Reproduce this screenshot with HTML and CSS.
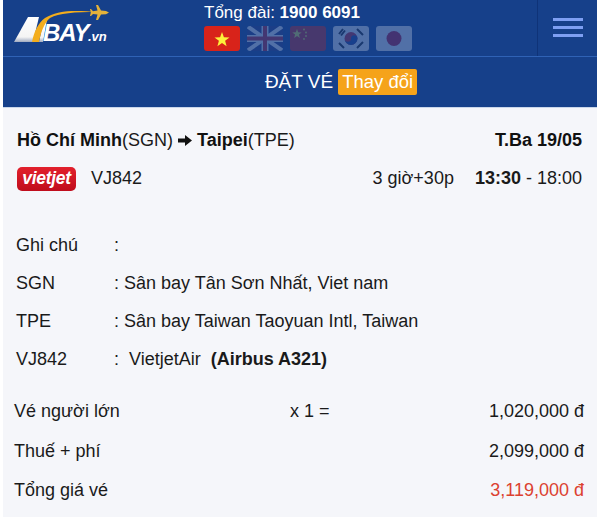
FILE: index.html
```html
<!DOCTYPE html>
<html lang="vi">
<head>
  <meta charset="UTF-8" />
  <title>ABAY.vn - Đặt vé</title>
  <link rel="stylesheet" href="styles.css">
</head>
<body>

<div class="page">
  <div class="header">
    <a class="logo">
      <svg width="96" height="42" viewBox="0 0 96 42">
        <defs>
          <linearGradient id="mount" x1="0" y1="0" x2="0" y2="1">
            <stop offset="0" stop-color="#ffffff"/>
            <stop offset="0.8" stop-color="#f4f4f4"/>
            <stop offset="1" stop-color="#9faac0"/>
          </linearGradient>
        </defs>
        <path d="M0 39 L14 14 L25 14 L19 39 Z" fill="url(#mount)"/>
        <path d="M25 39 L29 20 L33 16 L29 39 Z" fill="url(#mount)"/>
        <path d="M18 39 C20 29 24 20 31 15 C44 7 60 7 84 9 C60 9 45 10 36 15 C30 20 27 29 25 39 Z" fill="#f3ad1d"/>
        <path d="M82 2 L84 2 L87 7.6 L92 8 L95 9.6 L92 11.2 L87 11.6 L84 17 L82 17 L83.5 11.6 L79 11 L77 13 L76 13 L76.8 9.6 L76 6 L77 6 L79 8.2 L83.5 7.6 Z" fill="#e4b23a"/>
        <text x="29" y="38" class="logo-bay">BAY</text>
        <text x="74" y="38" class="logo-vn">.vn</text>
      </svg>
    </a>
    <div class="hotline">
      <div class="hotline-text">Tổng đài: <b>1900 6091</b></div>
      <div class="flags">
        <svg class="flag active" viewBox="0 0 36 25">
          <rect width="36" height="25" fill="#d8231a"/>
          <polygon points="18,6 19.9,11.2 25.5,11.4 21.1,14.8 22.6,20.2 18,17.1 13.4,20.2 14.9,14.8 10.5,11.4 16.1,11.2" fill="#fdf03a"/>
        </svg>
        <svg class="flag" viewBox="0 0 36 25">
          <rect width="36" height="25" fill="#2b3a80"/>
          <path d="M0 0 L36 25 M36 0 L0 25" stroke="#fff" stroke-width="4"/>
          <path d="M18 0 V25 M0 12.5 H36" stroke="#fff" stroke-width="7"/>
          <path d="M18 0 V25 M0 12.5 H36" stroke="#c8202f" stroke-width="4"/>
        </svg>
        <svg class="flag" viewBox="0 0 36 25">
          <rect width="36" height="25" fill="#d8231a"/>
          <polygon points="7,3 8.2,6.3 11.7,6.4 8.9,8.5 9.9,11.9 7,9.9 4.1,11.9 5.1,8.5 2.3,6.4 5.8,6.3" fill="#fdf03a"/>
          <circle cx="14" cy="3.5" r="0.9" fill="#fdf03a"/>
          <circle cx="16" cy="6.5" r="0.9" fill="#fdf03a"/>
          <circle cx="16" cy="10" r="0.9" fill="#fdf03a"/>
          <circle cx="14" cy="13" r="0.9" fill="#fdf03a"/>
        </svg>
        <svg class="flag" viewBox="0 0 36 25">
          <rect width="36" height="25" fill="#ffffff"/>
          <circle cx="18" cy="12.5" r="6.5" fill="#c8202f"/>
          <path d="M11.5 12.5 A6.5 6.5 0 0 0 24.5 12.5 A3.25 3.25 0 0 0 18 12.5 A3.25 3.25 0 0 1 11.5 12.5 Z" fill="#1c3f94"/>
          <path d="M6 8 L10 3 M8 9.5 L12 4.5 M24 3 L30 9 M24 22 L30 16 M6 17 L11 22" stroke="#222" stroke-width="2"/>
        </svg>
        <svg class="flag" viewBox="0 0 36 25">
          <rect width="36" height="25" fill="#ffffff"/>
          <circle cx="18" cy="12.5" r="7.5" fill="#c8102e"/>
        </svg>
      </div>
    </div>
    <div class="menu-btn">
      <span></span>
      <span></span>
      <span></span>
    </div>
  </div>

  <div class="title-bar">
    <span>ĐẶT VÉ</span>
    <a class="change-btn">Thay đổi</a>
  </div>

  <div class="content">
    <div class="route-row">
      <div><b>Hồ Chí Minh</b>(SGN)<svg class="arrow" width="14" height="11" viewBox="0 0 14 11"><path d="M0 3.5 H7 V0 L14 5.5 L7 11 V7.5 H0 Z" fill="#111"/></svg><b>Taipei</b>(TPE)</div>
      <b>T.Ba 19/05</b>
    </div>
    <div class="flight-row">
      <span class="airline-logo">vietjet</span>
      <span class="flight-no">VJ842</span>
      <span class="duration">3 giờ+30p</span>
      <span class="times"><b>13:30</b> - 18:00</span>
    </div>

    <div class="notes">
      <div class="note"><span class="note-label">Ghi chú</span><span>:</span></div>
      <div class="note"><span class="note-label">SGN</span><span>: Sân bay Tân Sơn Nhất, Viet nam</span></div>
      <div class="note"><span class="note-label">TPE</span><span>: Sân bay Taiwan Taoyuan Intl, Taiwan</span></div>
      <div class="note"><span class="note-label">VJ842</span><span>:&nbsp; VietjetAir&nbsp; <b>(Airbus A321)</b></span></div>
    </div>

    <div class="prices">
      <div class="price-row"><span class="price-name">Vé người lớn</span><span class="price-qty">x 1 =</span><span class="price-value">1,020,000 đ</span></div>
      <div class="price-row"><span class="price-name">Thuế + phí</span><span class="price-qty"></span><span class="price-value">2,099,000 đ</span></div>
      <div class="price-row"><span class="price-name">Tổng giá vé</span><span class="price-qty"></span><span class="price-value total">3,119,000 đ</span></div>
    </div>
  </div>
</div>

</body>
</html>
```

FILE: styles.css
```css
html, body {
  margin: 0;
  padding: 0;
  height: 517px;
  overflow: hidden;
  background: #fff;
}

body {
  font-family: "Liberation Sans", Arial, sans-serif;
  font-size: 18px;
  color: #1a1a1a;
}

.page {
  width: 594px;
  height: 517px;
  margin-left: 3px;
  background: #f5f6fa;
}

/* header */
.header {
  display: flex;
  height: 56px;
  background: #16408a;
  border-bottom: 1px solid #2f62b5;
}

.logo {
  display: block;
  width: 201px;
  padding: 3px 0 0 11px;
  box-sizing: border-box;
}

.logo-bay {
  font-family: "Liberation Sans", Arial, sans-serif;
  font-size: 24px;
  font-weight: bold;
  font-style: italic;
  fill: #ffffff;
  letter-spacing: -1.2px;
}

.logo-vn {
  font-family: "Liberation Sans", Arial, sans-serif;
  font-size: 13px;
  font-style: italic;
  font-weight: bold;
  fill: #ffffff;
}

.hotline {
  flex: 1;
  padding-top: 4px;
}

.hotline-text {
  color: #fff;
  height: 22px;
  line-height: 18px;
  font-size: 17px;
}

.flags {
  display: flex;
  gap: 7px;
}

.flag {
  display: block;
  width: 36px;
  height: 25px;
  border-radius: 3px;
  opacity: 0.25;
}

.flag.active {
  opacity: 1;
}

.menu-btn {
  width: 60px;
  border-left: 1px solid #0f3378;
  display: flex;
  flex-direction: column;
  gap: 5px;
  padding: 18px 0 0 15px;
  box-sizing: border-box;
}

.menu-btn span {
  display: block;
  width: 30px;
  height: 3px;
  background: #7e9ff2;
}

/* title bar */
.title-bar {
  display: flex;
  justify-content: center;
  align-items: center;
  gap: 5px;
  height: 50px;
  padding-left: 82px;
  box-sizing: border-box;
  background: #16408a;
  color: #fff;
  font-size: 19px;
  box-shadow: 0 1px 0 #c9d6ea;
}

.change-btn {
  background: #f5a31a;
  border-radius: 2px;
  padding: 2px 4px;
  line-height: 22px;
  font-size: 18.5px;
}

/* content */
.content {
  padding: 0 15px 0 14px;
}

.route-row {
  display: flex;
  justify-content: space-between;
  align-items: center;
  height: 30px;
  margin-top: 18px;
}

.route-row b {
  color: #111;
}

.arrow {
  margin: 0 5px;
}

.flight-row {
  display: flex;
  align-items: center;
  height: 26px;
  margin-top: 10px;
}

.airline-logo {
  width: 59px;
  height: 24px;
  margin-top: 2px;
  line-height: 23px;
  text-align: center;
  border-radius: 5px;
  background: linear-gradient(#e2202c, #c00d1c);
  color: #fff;
  font-size: 17.5px;
  font-weight: bold;
  font-style: italic;
  letter-spacing: -0.3px;
}

.flight-no {
  margin-left: 15px;
  flex: 1;
}

.duration {
  margin-right: 21px;
}

.notes {
  margin: 35px 0 0 -1px;
}

.note {
  display: flex;
  height: 38px;
  line-height: 38px;
}

.note-label {
  width: 98px;
}

.prices {
  margin: 14px -2px 0 -3px;
}

.price-row {
  display: flex;
  height: 39.5px;
  line-height: 39.5px;
}

.price-name {
  width: 276px;
}

.price-qty {
  flex: 1;
}

.price-value.total {
  color: #dc4130;
}
```
